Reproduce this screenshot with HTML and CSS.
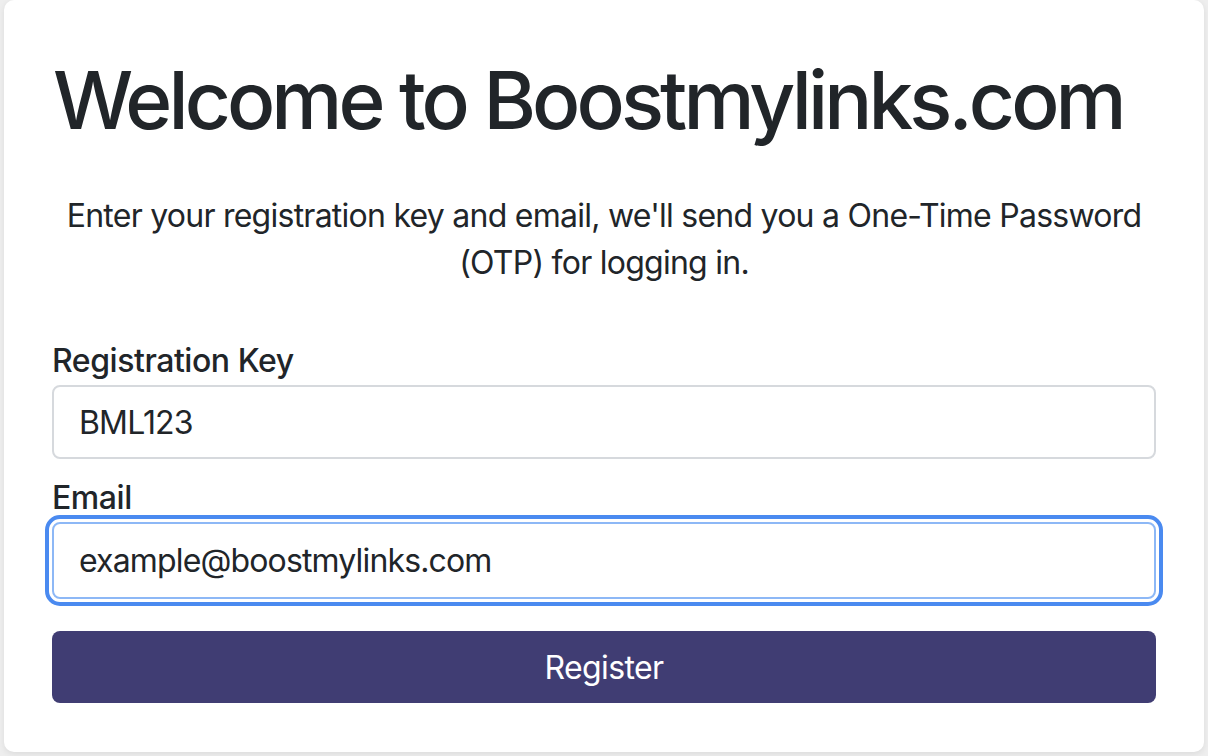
FILE: index.html
```html
<!DOCTYPE html>
<html lang="en">
<head>
<meta charset="UTF-8">
<meta name="viewport" content="width=device-width, initial-scale=1.0">
<title>Boostmylinks - Register</title>
<link rel="stylesheet" href="styles.css">
</head>
<body>
    <div class="card">
        <h1 class="title">Welcome to Boostmylinks.com</h1>
        <p class="intro">Enter your registration key and email, we'll send you a One-Time Password (OTP) for logging in.</p>
        <form class="form">
            <label for="regkey">Registration Key</label>
            <input type="text" id="regkey" class="field" value="BML123">
            <label for="email">Email</label>
            <input type="email" id="email" class="field focused" value="example@boostmylinks.com">
            <button type="button" class="register">Register</button>
        </form>
    </div>
</body>
</html>
```

FILE: styles.css
```css
html, body {
    margin: 0;
    height: 100%;
}

body {
    background-color: #eeeeee;
    padding: 0 4px;
    font-family: "Inter", "Liberation Sans", sans-serif;
    color: #212529;
    box-sizing: border-box;
}

.card {
    background-color: #fff;
    border-radius: 10px;
    box-shadow: 0 2px 6px rgba(0, 0, 0, 0.08);
    padding: 52px 48px 49px;
}

.title {
    font-size: 80px;
    font-weight: 500;
    line-height: 96px;
    margin: 0 0 44px 1px;
    letter-spacing: -3.9px;
    white-space: nowrap;
}

.intro {
    font-size: 32px;
    line-height: 47px;
    text-align: center;
    margin: 0 0 51px;
    letter-spacing: -0.75px;
}

.form {
    display: flex;
    flex-direction: column;
}

.form label {
    font-size: 32px;
    font-weight: 500;
    line-height: 48px;
    letter-spacing: -0.45px;
}

.field {
    font-family: inherit;
    font-size: 32px;
    letter-spacing: -0.85px;
    color: #212529;
    height: 74px;
    box-sizing: border-box;
    border: 2px solid #d6d9dd;
    border-radius: 8px;
    padding: 0 25px;
    margin-bottom: 15px;
    outline: none;
}

.field.focused {
    height: 77px;
    border-color: #8db8f6;
    outline: 4px solid #4a8af0;
    outline-offset: 3px;
    margin-bottom: 32px;
}

.register {
    height: 72px;
    border: 0;
    border-radius: 8px;
    background-color: #403d73;
    color: #fff;
    font-family: inherit;
    font-size: 32px;
    letter-spacing: -0.6px;
    cursor: pointer;
}
```
